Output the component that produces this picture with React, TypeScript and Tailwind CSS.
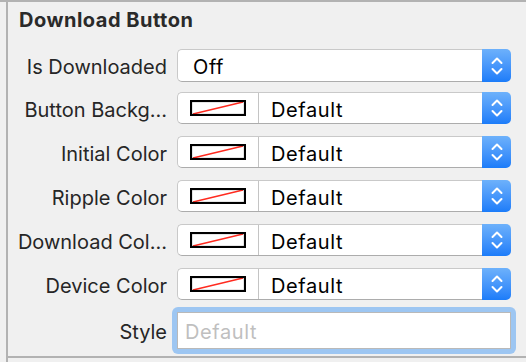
const rows = [
  { label: "Is Downloaded", value: "Off", color: false },
  { label: "Button Backg…", value: "Default", color: true },
  { label: "Initial Color", value: "Default", color: true },
  { label: "Ripple Color", value: "Default", color: true },
  { label: "Download Col…", value: "Default", color: true },
  { label: "Device Color", value: "Default", color: true },
];

function Stepper() {
  return (
    <div className="flex w-[29px] flex-none items-center justify-center rounded-r-[5px] bg-gradient-to-b from-[#6db1fb] to-[#1b7cf9]">
      <svg width="14" height="18" viewBox="0 0 14 18" fill="none" stroke="white" strokeWidth="2" strokeLinecap="round" strokeLinejoin="round">
        <path d="M2.5 6 L7 1.5 L11.5 6" />
        <path d="M2.5 12 L7 16.5 L11.5 12" />
      </svg>
    </div>
  );
}

function Swatch() {
  return (
    <div className="flex w-[81px] flex-none items-center justify-center border-r border-[#c4c4c4]">
      <svg width="56" height="16" viewBox="0 0 56 16">
        <line x1="3" y1="14" x2="53" y2="2" stroke="#ff2a1f" strokeWidth="1.4" />
        <rect x="1" y="1" width="54" height="14" fill="none" stroke="black" strokeWidth="2.2" />
      </svg>
    </div>
  );
}

function Popup({ value, color }: { value: string; color: boolean }) {
  return (
    <div className="flex h-full w-[334px]">
      <div className="flex flex-1 items-stretch overflow-hidden rounded-l-[5px] border border-r-0 border-[#c9c9c9] border-b-[#acacac] bg-white">
        {color && <Swatch />}
        <div className={color ? "flex items-center pl-[12px] pt-[3px] leading-[24px] tracking-[0.6px] text-black" : "flex items-center pl-[15px] pt-[3px] leading-[24px] tracking-[0.6px] text-black"}>
          {value}
        </div>
      </div>
      <Stepper />
    </div>
  );
}

export default function App() {
  return (
    <div
      className="flex h-[362px] w-[526px] overflow-hidden border-t-2 border-[#b2b2b2] bg-[#f0f0f0] text-[20px] text-[#262626]"
      style={{ fontFamily: "Inter, 'Liberation Sans', sans-serif" }}
    >
      <div className="w-[6px] flex-none" />
      <div className="flex flex-1 flex-col border-l-2 border-[#b2b2b2]">
        <div className="flex h-[356px] flex-none flex-col border-b-2 border-[#b2b2b2]">
          <div className="h-[30px] pl-[11px] pt-[6px] text-[20px] font-bold leading-[24px] tracking-[0.5px] text-[#2a2a2a]">Download Button</div>
          <div className="mt-[17px] flex flex-col">
            {rows.map((r, i) => (
              <div
                key={r.label}
                className={i === 0 ? "flex h-[33px] items-center gap-[10px]" : i === 1 ? "mt-[10px] flex h-[32px] items-center gap-[10px]" : "mt-[12px] flex h-[32px] items-center gap-[10px]"}
              >
                <div className="w-[159px] whitespace-nowrap pt-[3px] text-right leading-[24px]">{r.label}</div>
                <Popup value={r.value} color={r.color} />
              </div>
            ))}
            <div className="mt-[7px] flex h-[47px] items-center gap-[10px]">
              <div className="w-[159px] pt-[3px] text-right leading-[24px]">Style</div>
              <div className="-mx-[5px] w-[344px] rounded-[6px] bg-[#9dc6f2] p-[5px]">
                <div className="flex h-[37px] items-center border border-[#b9b9b9] bg-white pl-[7px] pt-[3px] leading-[24px] tracking-[0.6px] text-[#bfbfbf]">Default</div>
              </div>
            </div>
          </div>
        </div>
      </div>
    </div>
  );
}
